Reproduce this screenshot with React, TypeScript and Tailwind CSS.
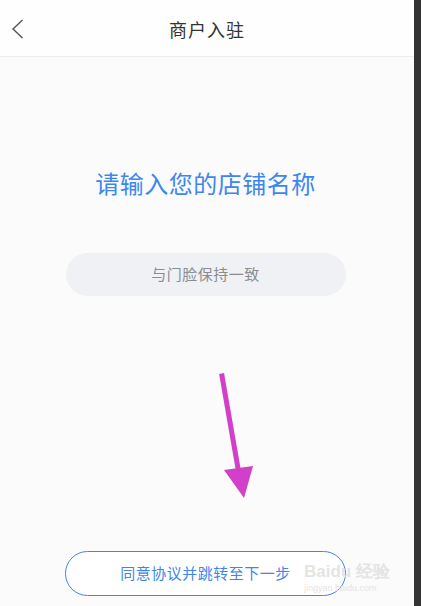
import React from 'react';

const font = { fontFamily: '"Noto Sans CJK SC", "Noto Sans", sans-serif' };

const App: React.FC = () => {
  return (
    <div className="flex w-[421px] h-[606px] overflow-hidden bg-[#333333]" style={font}>
      <div className="relative flex flex-col w-[414px] h-full bg-[#fbfbfb]">
        {/* header */}
        <div className="relative flex items-center justify-center h-[57px] bg-[#fdfefd] border-b border-[#ececec]">
          <svg className="absolute left-[11px] top-[19px]" width="13" height="20" viewBox="0 0 13 20">
            <path d="M11.5 1 L2 10 L11.5 19" fill="none" stroke="#555" strokeWidth="1.4" />
          </svg>
          <span className="text-[18px] text-[#333] tracking-[1px] mt-[2px]">商户入驻</span>
        </div>

        {/* form */}
        <div className="flex flex-col items-center pt-[106px]">
          <h1 className="text-[24px] leading-[40px] text-[#3e86ef] tracking-[0.5px] mr-[3px]">请输入您的店铺名称</h1>
          <div className="mt-[50px] flex items-center justify-center w-[280px] h-[43px] rounded-full bg-[#eff1f4] mr-[3px]">
            <span className="text-[15px] text-[#8a8c90] tracking-[0.5px]">与门脸保持一致</span>
          </div>
        </div>

        {/* annotation arrow */}
        <svg className="absolute left-[215px] top-[370px]" width="50" height="135" viewBox="0 0 50 135">
          <path d="M7 6 L24 104" stroke="#d23fc8" strokeWidth="5" strokeLinecap="square" />
          <path d="M9 100 L38 96 L29 128 Z" fill="#d23fc8" />
        </svg>

        {/* bottom button */}
        <div className="mt-auto flex justify-center pb-[10px]">
          <button className="flex items-center justify-center w-[281px] h-[45px] rounded-full border-[1.5px] border-[#3e86ef] bg-white mr-[3px]">
            <span className="text-[15px] text-[#3e86ef] tracking-[0.5px]">同意协议并跳转至下一步</span>
          </button>
        </div>

        {/* watermark */}
        <div className="absolute left-[304px] top-[562px] flex flex-col items-start text-[#e4e4e4] pointer-events-none">
          <span className="text-[17px] font-bold leading-[20px] whitespace-nowrap" style={{ fontFamily: '"Liberation Sans", sans-serif' }}>Baidu 经验</span>
          <span className="text-[9px] leading-[12px] whitespace-nowrap" style={{ fontFamily: '"Liberation Sans", sans-serif' }}>jingyan.baidu.com</span>
        </div>
      </div>
    </div>
  );
};

export default App;
